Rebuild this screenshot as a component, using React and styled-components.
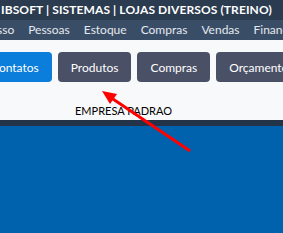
import styled, { createGlobalStyle } from 'styled-components';

const GlobalStyle = createGlobalStyle`
  html, body {
    margin: 0;
    padding: 0;
    overflow: hidden;
    background: #0062ad;
  }
  body {
    font-family: 'Lato', 'Noto Sans', sans-serif;
  }
`;

const Page = styled.div`
  position: relative;
  width: 283px;
  height: 233px;
  display: flex;
  flex-direction: column;
  overflow: hidden;
`;

const TitleBar = styled.div`
  height: 20px;
  background: #2b3b50;
  color: #ffffff;
  font-weight: 700;
  font-size: 12px;
  letter-spacing: 0.1px;
  line-height: 20px;
  white-space: nowrap;
  padding-left: 1px;
`;

const MenuBar = styled.div`
  height: 20px;
  background: #3a4d66;
  display: flex;
  gap: 14px;
  align-items: center;
  white-space: nowrap;
  margin-left: -3px;
`;

const MenuItem = styled.span`
  color: #e4e9ef;
  font-size: 12px;
  line-height: 20px;
`;

const Content = styled.div`
  height: 80px;
  background: #f8f9fa;
  display: flex;
  flex-direction: column;
`;

const ButtonRow = styled.div`
  display: flex;
  gap: 6px;
  margin-top: 12px;
  margin-left: -22px;
  white-space: nowrap;
`;

const NavButton = styled.div`
  height: 30px;
  padding: 0 13px;
  border-radius: 4px;
  background: ${(p) => (p.active ? '#0b7ddb' : '#4a5066')};
  color: #ffffff;
  font-size: 12px;
  display: flex;
  align-items: center;
  flex-shrink: 0;
`;

const Company = styled.div`
  margin-top: 22px;
  margin-left: 75px;
  font-size: 11px;
  color: #000000;
  line-height: 14px;
`;

const Stripe = styled.div`
  height: 6px;
  background: #243448;
`;

const BlueArea = styled.div`
  flex: 1;
  background: #0062ad;
`;

const Arrow = styled.svg`
  position: absolute;
  left: 0;
  top: 0;
  pointer-events: none;
`;

export default function App() {
  return (
    <>
      <GlobalStyle />
      <Page>
        <TitleBar>IBSOFT | SISTEMAS | LOJAS DIVERSOS (TREINO)</TitleBar>
        <MenuBar>
          <MenuItem>sso</MenuItem>
          <MenuItem>Pessoas</MenuItem>
          <MenuItem>Estoque</MenuItem>
          <MenuItem>Compras</MenuItem>
          <MenuItem>Vendas</MenuItem>
          <MenuItem>Financeiro</MenuItem>
        </MenuBar>
        <Content>
          <ButtonRow>
            <NavButton active>Contatos</NavButton>
            <NavButton>Produtos</NavButton>
            <NavButton>Compras</NavButton>
            <NavButton>Orçamentos</NavButton>
          </ButtonRow>
          <Company>EMPRESA PADRAO</Company>
        </Content>
        <Stripe />
        <BlueArea />
        <Arrow width="283" height="233" viewBox="0 0 283 233">
          <line x1="190" y1="151" x2="110" y2="97" stroke="#ff0000" strokeWidth="3" />
          <polygon points="102,91 117,94 110,104" fill="#ff0000" />
        </Arrow>
      </Page>
    </>
  );
}
